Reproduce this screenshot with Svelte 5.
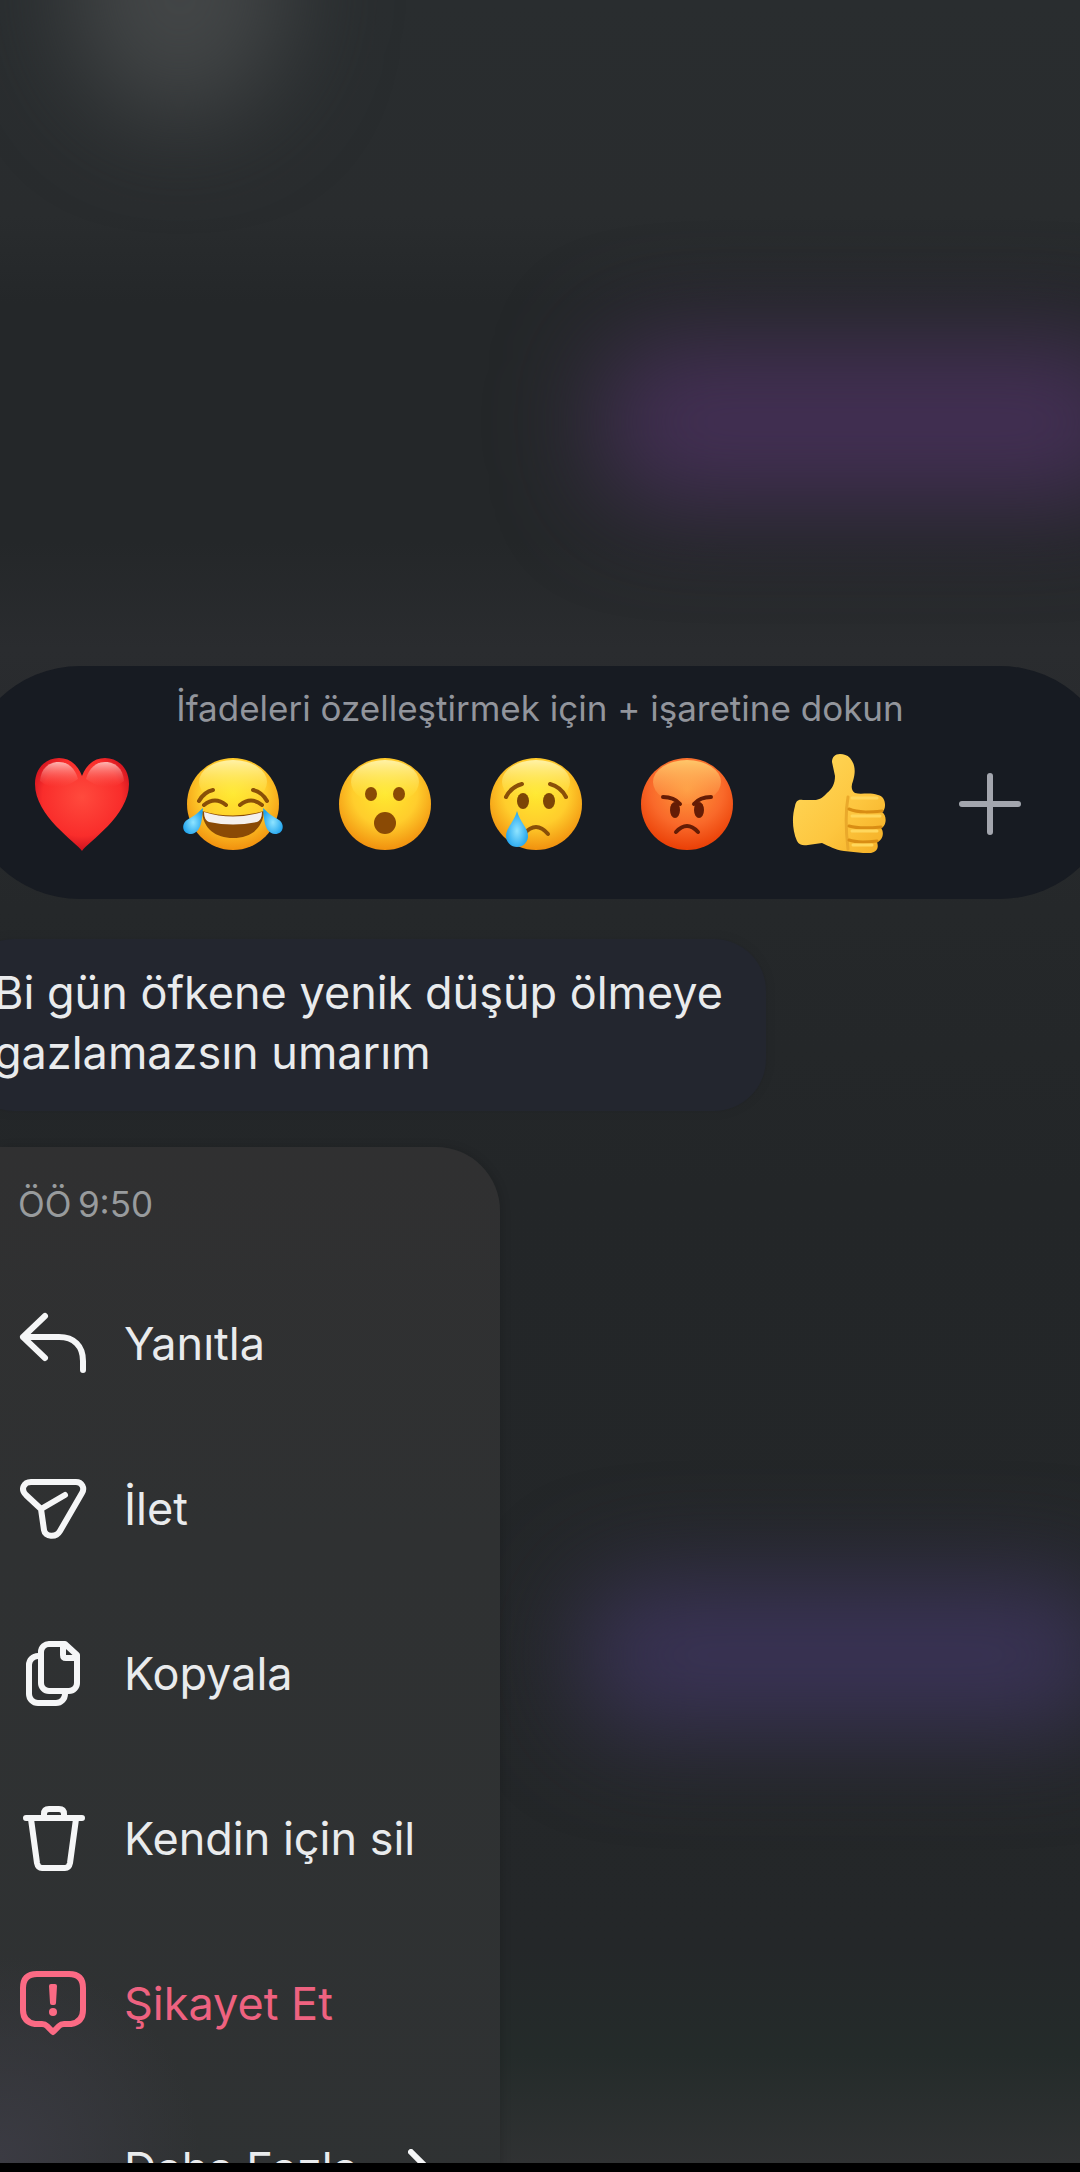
<script lang="ts">
  type Action = {
    id: string;
    label: string;
    danger?: boolean;
    more?: boolean;
  };

  const reactions = [
    { id: "heart", label: "Kalp" },
    { id: "laugh", label: "Kahkaha" },
    { id: "wow", label: "Şaşkın" },
    { id: "sad", label: "Üzgün" },
    { id: "angry", label: "Kızgın" },
    { id: "like", label: "Beğen" },
  ];

  const actions: Action[] = [
    { id: "reply", label: "Yanıtla" },
    { id: "forward", label: "İlet" },
    { id: "copy", label: "Kopyala" },
    { id: "delete", label: "Kendin için sil" },
    { id: "report", label: "Şikayet Et", danger: true },
    { id: "more", label: "Daha Fazla", more: true },
  ];

  let selected = $state("");
</script>

{#snippet emoji(id: string)}
  <svg class="emoji" viewBox="0 0 100 100" aria-hidden="true">
    {#if id === "heart"}
      <path
        d="M50 97C44 88 3 62 3 30C3 14 14 4 27 4C38 4 46 11 50 22C54 11 62 4 73 4C86 4 97 14 97 30C97 62 56 88 50 97Z"
        fill="url(#heart-fill)"
      />
      <path d="M8 27C9 14 17 8 27 8C36 8 43 14 46 25C34 34 18 36 8 27Z" fill="url(#heart-shine)" />
      <path d="M92 27C91 14 83 8 73 8C64 8 57 14 54 25C66 34 82 36 92 27Z" fill="url(#heart-shine)" />
    {:else if id === "like"}
      <path
        d="M51 0C46 0 43 3 43 8L46 22C46 30 43 35 38 39C34 43 32 45 27 46H14C9 45 7 47 6 52C3 62 3 76 8 87C10 91 14 92 19 91L33 89C40 92 46 96 55 97L74 99H82C88 98 90 94 88 88C93 87 96 79 92 74C98 72 98 61 93 58C98 55 97 42 89 41C80 38 72 41 66 39C62 36 62 32 64 27C67 17 66 10 61 4C58 1 55 0 51 0Z"
        fill="url(#hand-fill)"
      />
      <path d="M59 43C56 60 57 78 59 95" class="crease soft" />
      <path d="M60 55C70 59 82 58 93 57M60 72C70 75 82 74 92 73M60 86C68 89 79 88 88 87" class="crease" />
      <path d="M63 44H88M63 62H91M63 77H88M64 91H83" class="knuckle" />
    {:else}
      <circle cx="50" cy="50" r="46" fill={id === "angry" ? "url(#angry-fill)" : "url(#face-fill)"} />
      <ellipse cx="50" cy="28" rx="34" ry="22" fill={id === "angry" ? "url(#angry-shine)" : "url(#face-shine)"} />
      {#if id === "laugh"}
        <path d="M16 47Q21 38 30 36M84 47Q79 38 70 36" class="line" />
        <path d="M21 51Q32 42 43 51M57 51Q68 42 79 51" class="line" />
        <path d="M19 57Q50 66 81 57C80 75 67 84 50 84S20 75 19 57Z" fill="#8a4a05" />
        <path d="M21 58Q50 67 79 58Q79 66 74 68Q50 73 26 68Q21 66 21 58Z" fill="#f4f0ee" />
        <path d="M20 54C19 64 19 79 8 80C-1 80-2 70 4 66C9 63 14 60 20 54Z" fill="url(#tear-fill)" />
        <path d="M80 54C81 64 81 79 92 80C101 80 102 70 96 66C91 63 86 60 80 54Z" fill="url(#tear-fill)" />
      {:else if id === "wow"}
        <ellipse cx="36" cy="40" rx="6" ry="7" fill="#8a4a05" />
        <ellipse cx="64" cy="40" rx="6" ry="7" fill="#8a4a05" />
        <circle cx="50" cy="69" r="11" fill="#8a4a05" />
      {:else if id === "sad"}
        <path d="M20 43Q25 33 36 30M80 43Q75 33 64 30" class="line" />
        <ellipse cx="37" cy="47" rx="6" ry="8" fill="#7c4506" />
        <ellipse cx="63" cy="47" rx="6" ry="8" fill="#7c4506" />
        <path d="M38 80Q50 66 62 80" class="line" />
        <path d="M31 57C28 68 20 74 20 82A11 11 0 0 0 42 82C42 74 34 68 31 57Z" fill="url(#tear-fill)" />
      {:else}
        <path d="M26 43Q37 43 43 50M74 43Q63 43 57 50" class="line dark" />
        <ellipse cx="38" cy="56" rx="5" ry="8" fill="#641c05" />
        <ellipse cx="62" cy="56" rx="5" ry="8" fill="#641c05" />
        <path d="M39 78Q50 66 61 78" class="line dark" />
      {/if}
    {/if}
  </svg>
{/snippet}

{#snippet icon(id: string)}
  <svg class="icon" viewBox="0 0 72 72" aria-hidden="true">
    {#if id === "reply"}
      <path d="M28 8L6 29L28 50M6 29H42C57 29 66 38 66 53V62" />
    {:else if id === "forward"}
      <path
        d="M14 9H59C65 9 68 15 65 20L43 58C39 65 28 64 27 57L24 36L9 22C3 16 7 9 14 9ZM24 36L48 22"
      />
    {:else if id === "copy"}
      <path d="M22 18H21A9 9 0 0 0 12 27V56A9 9 0 0 0 21 65H39A9 9 0 0 0 48 56V55" />
      <path d="M33 6H48L60 17V45A8 8 0 0 1 52 53H32A8 8 0 0 1 24 45V14A8 8 0 0 1 33 6Z" />
      <path d="M46 7V17Q46 20 49 20H59" />
    {:else if id === "delete"}
      <path d="M9 15H65M27 14V11Q27 6 32 6H42Q47 6 47 11V14" />
      <path d="M14 16L20 60Q21 65 25 65H48Q52 65 53 60L59 16" />
    {:else if id === "report"}
      <path
        d="M20 6H52Q66 6 66 20V42Q66 54 54 56H47Q44 56 42 58L36 64L30 58Q28 56 25 56H18Q6 54 6 42V20Q6 6 20 6Z"
      />
      <path class="solid" d="M32 18Q32 16 34 16H38Q40 16 40 18L39 35Q39 37 37 37H35Q33 37 33 35Z" />
      <circle class="solid" cx="36" cy="44" r="4" />
    {/if}
  </svg>
{/snippet}

<svg class="defs" aria-hidden="true">
  <defs>
    <radialGradient id="heart-fill" cx="50%" cy="42%" r="60%">
      <stop offset="0" stop-color="#ff4a3d" />
      <stop offset="0.7" stop-color="#f92d2b" />
      <stop offset="1" stop-color="#c80d1c" />
    </radialGradient>
    <linearGradient id="heart-shine" x1="0" y1="0" x2="0" y2="1">
      <stop offset="0" stop-color="#ffc4c0" stop-opacity="0.9" />
      <stop offset="1" stop-color="#ff5a50" stop-opacity="0" />
    </linearGradient>
    <radialGradient id="face-fill" cx="50%" cy="38%" r="64%">
      <stop offset="0" stop-color="#ffe92f" />
      <stop offset="0.55" stop-color="#ffcd2c" />
      <stop offset="1" stop-color="#f08c0c" />
    </radialGradient>
    <linearGradient id="face-shine" x1="0" y1="0" x2="0" y2="1">
      <stop offset="0" stop-color="#fff6b4" stop-opacity="0.9" />
      <stop offset="1" stop-color="#ffe92f" stop-opacity="0" />
    </linearGradient>
    <radialGradient id="angry-fill" cx="50%" cy="34%" r="66%">
      <stop offset="0" stop-color="#ff9a3c" />
      <stop offset="0.6" stop-color="#f9692a" />
      <stop offset="1" stop-color="#ea3f06" />
    </radialGradient>
    <linearGradient id="angry-shine" x1="0" y1="0" x2="0" y2="1">
      <stop offset="0" stop-color="#ffd070" stop-opacity="0.9" />
      <stop offset="1" stop-color="#ff9a4c" stop-opacity="0.2" />
    </linearGradient>
    <radialGradient id="tear-fill" cx="50%" cy="55%" r="55%">
      <stop offset="0" stop-color="#8fe4ff" />
      <stop offset="1" stop-color="#1fa3ee" />
    </radialGradient>
    <linearGradient id="hand-fill" x1="0" y1="0" x2="1" y2="1">
      <stop offset="0" stop-color="#ffda5c" />
      <stop offset="0.6" stop-color="#fdc63f" />
      <stop offset="1" stop-color="#f4ae24" />
    </linearGradient>
  </defs>
</svg>

<div class="page">
  <main class="screen">
    <div class="backdrop" aria-hidden="true">
      <div class="glow avatar"></div>
      <div class="glow sent"></div>
      <div class="glow reply"></div>
    </div>

    <section class="reactions">
      <p class="hint">İfadeleri özelleştirmek için + işaretine dokun</p>
      <div class="reaction-row">
        {#each reactions as reaction (reaction.id)}
          <button
            type="button"
            aria-label={reaction.label}
            aria-pressed={selected === reaction.id}
            onclick={() => (selected = reaction.id)}
          >
            {@render emoji(reaction.id)}
          </button>
        {/each}
        <button type="button" aria-label="İfade ekle">
          <svg class="emoji" viewBox="0 0 100 100" aria-hidden="true">
            <path d="M50 22V78M22 50H78" class="plus" />
          </svg>
        </button>
      </div>
    </section>

    <p class="message">Bi gün öfkene yenik düşüp ölmeye gazlamazsın umarım</p>

    <nav class="menu">
      <time datetime="09:50">ÖÖ&#8201;9:50</time>
      {#each actions as action (action.id)}
        <button type="button" class="action" class:danger={action.danger}>
          {@render icon(action.id)}
          <span>{action.label}</span>
          {#if action.more}
            <svg class="chevron" viewBox="0 0 24 40" aria-hidden="true">
              <path d="M3 3L20 20L3 37" />
            </svg>
          {/if}
        </button>
      {/each}
    </nav>
  </main>
</div>

<style>
  :global(body) {
    margin: 0;
    background: #000;
  }

  .page {
    box-sizing: border-box;
    height: 100vh;
    padding-bottom: 9px;
    background: #000;
    font-family: Inter, "Noto Sans", sans-serif;
    color: #e9ebed;
  }

  .screen {
    position: relative;
    box-sizing: border-box;
    height: 100%;
    padding-top: 666px;
    overflow: hidden;
    background: linear-gradient(
      #292d2f 0,
      #292c2e 10%,
      #242729 14%,
      #242729 25%,
      #2a2c2f 30%,
      #25282a 42%,
      #232628 55%,
      #242729 90%,
      #242b2a 95%,
      #303233 100%
    );
  }

  .backdrop {
    position: absolute;
    inset: 0;
    overflow: hidden;
  }

  .glow {
    position: absolute;
    filter: blur(50px);
  }

  .avatar {
    top: -140px;
    left: 70px;
    width: 220px;
    height: 260px;
    border-radius: 50%;
    background: #434647;
  }

  .sent {
    top: 340px;
    left: 600px;
    right: -60px;
    height: 164px;
    border-radius: 60px;
    background: #432f54;
  }

  .reply {
    top: 1580px;
    left: 580px;
    right: -30px;
    height: 150px;
    border-radius: 60px;
    background: #3a3356;
  }

  .defs {
    position: absolute;
    width: 0;
    height: 0;
  }

  p {
    margin: 0;
  }

  button {
    padding: 0;
    border: none;
    background: none;
    color: inherit;
    font: inherit;
    cursor: pointer;
  }

  .reactions {
    position: relative;
    box-sizing: border-box;
    height: 233px;
    margin: 0 -36px;
    padding-top: 20px;
    border-radius: 116px;
    background: #171b22;
  }

  .hint {
    color: #92959c;
    font-size: 35px;
    line-height: 44px;
    text-align: center;
  }

  .reaction-row {
    display: flex;
    justify-content: space-between;
    margin-top: 24px;
    padding: 0 76px 0 68px;
  }

  .reaction-row button {
    display: flex;
  }

  .emoji {
    width: 100px;
    height: 100px;
    overflow: visible;
  }

  .line {
    fill: none;
    stroke: #8a4f08;
    stroke-width: 4;
    stroke-linecap: round;
  }

  .line.dark {
    stroke: #641c05;
  }

  .crease {
    fill: none;
    stroke: #d98d14;
    stroke-width: 3;
    stroke-linecap: round;
  }

  .crease.soft {
    stroke: #eaa92b;
  }

  .knuckle {
    fill: none;
    stroke: #ffd75c;
    stroke-width: 3;
    stroke-linecap: round;
  }

  .plus {
    fill: none;
    stroke: #a3a6ae;
    stroke-width: 6;
    stroke-linecap: round;
  }

  .message {
    position: relative;
    box-sizing: border-box;
    width: 804px;
    margin: 40px 0 0 -38px;
    padding: 24px 32px 28px;
    border-radius: 52px;
    background: #23262f;
    box-shadow: 0 0 12px rgba(0, 0, 0, 0.08);
    font-size: 45px;
    line-height: 60px;
  }

  .menu {
    position: relative;
    box-sizing: border-box;
    width: 500px;
    margin-top: 36px;
    padding: 32px 0;
    border-radius: 0 64px 0 0;
    background:
      radial-gradient(circle at 0 1010px, #3b3b43, transparent 200px),
      linear-gradient(#303031, #2f3132 35%, #2f3233);
    box-shadow: 2px 0 10px rgba(0, 0, 0, 0.14);
  }

  time {
    display: block;
    height: 82px;
    padding-left: 18px;
    color: #989b9d;
    font-size: 35px;
    line-height: 50px;
  }

  .action {
    display: flex;
    align-items: center;
    width: 100%;
    height: 165px;
    padding-left: 17px;
    font-size: 45px;
    text-align: left;
  }

  .action span {
    margin-left: 35px;
  }

  .icon {
    width: 72px;
    height: 72px;
    flex: none;
  }

  .icon path,
  .chevron path {
    fill: none;
    stroke: #f5f6f7;
    stroke-width: 6;
    stroke-linecap: round;
    stroke-linejoin: round;
  }

  .danger {
    color: #ee6280;
  }

  .danger .icon path {
    stroke: #fb6a84;
  }

  .danger .icon .solid {
    fill: #fb6a84;
    stroke: none;
  }

  .chevron {
    width: 24px;
    height: 40px;
    margin-left: 50px;
  }
</style>
